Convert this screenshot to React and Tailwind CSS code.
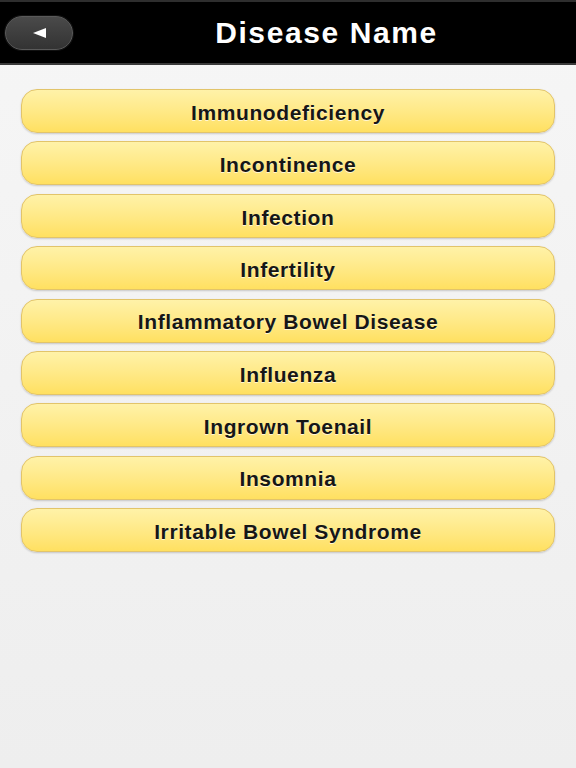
import React from 'react';

const diseases = [
  'Immunodeficiency',
  'Incontinence',
  'Infection',
  'Infertility',
  'Inflammatory Bowel Disease',
  'Influenza',
  'Ingrown Toenail',
  'Insomnia',
  'Irritable Bowel Syndrome',
];

const App = () => {
  return (
    <div
      className="min-h-[768px] w-full bg-gradient-to-b from-[#f6f6f6] to-[#eeeeee]"
      style={{ fontFamily: '"Liberation Sans", Arial, sans-serif' }}
    >
      <header className="h-[65px] bg-black border-t-2 border-t-[#2e2e2e] border-b-2 border-b-[#3a3a3a] flex items-center">
        <button className="ml-[5px] w-[68px] h-[34px] rounded-full bg-gradient-to-b from-[#4a4a4a] to-[#333333] border border-[#5a5a5a] shadow-[0_0_0_1px_#111] flex items-center justify-center">
          <svg width="13" height="10" viewBox="0 0 13 10">
            <polygon points="0,5 13,0 13,10" fill="#ffffff" />
          </svg>
        </button>
        <h1 className="flex-1 text-center pl-[4px] text-white font-bold text-[30px] tracking-[1.6px]">
          Disease Name
        </h1>
      </header>

      <div className="px-[21px] pt-[24px] flex flex-col gap-[8.4px]">
        {diseases.map((name) => (
          <button
            key={name}
            className="h-[44px] w-full pt-[3px] rounded-[16px] border border-[#e2c46a] bg-gradient-to-b from-[#fff2a8] to-[#ffe060] shadow-[0_1px_2px_rgba(0,0,0,0.18)] flex items-center justify-center text-[#161616] font-bold text-[21px] tracking-[0.6px] [text-shadow:0_1px_0_rgba(255,255,255,0.7)]"
          >
            {name}
          </button>
        ))}
      </div>
    </div>
  );
};

export default App;
